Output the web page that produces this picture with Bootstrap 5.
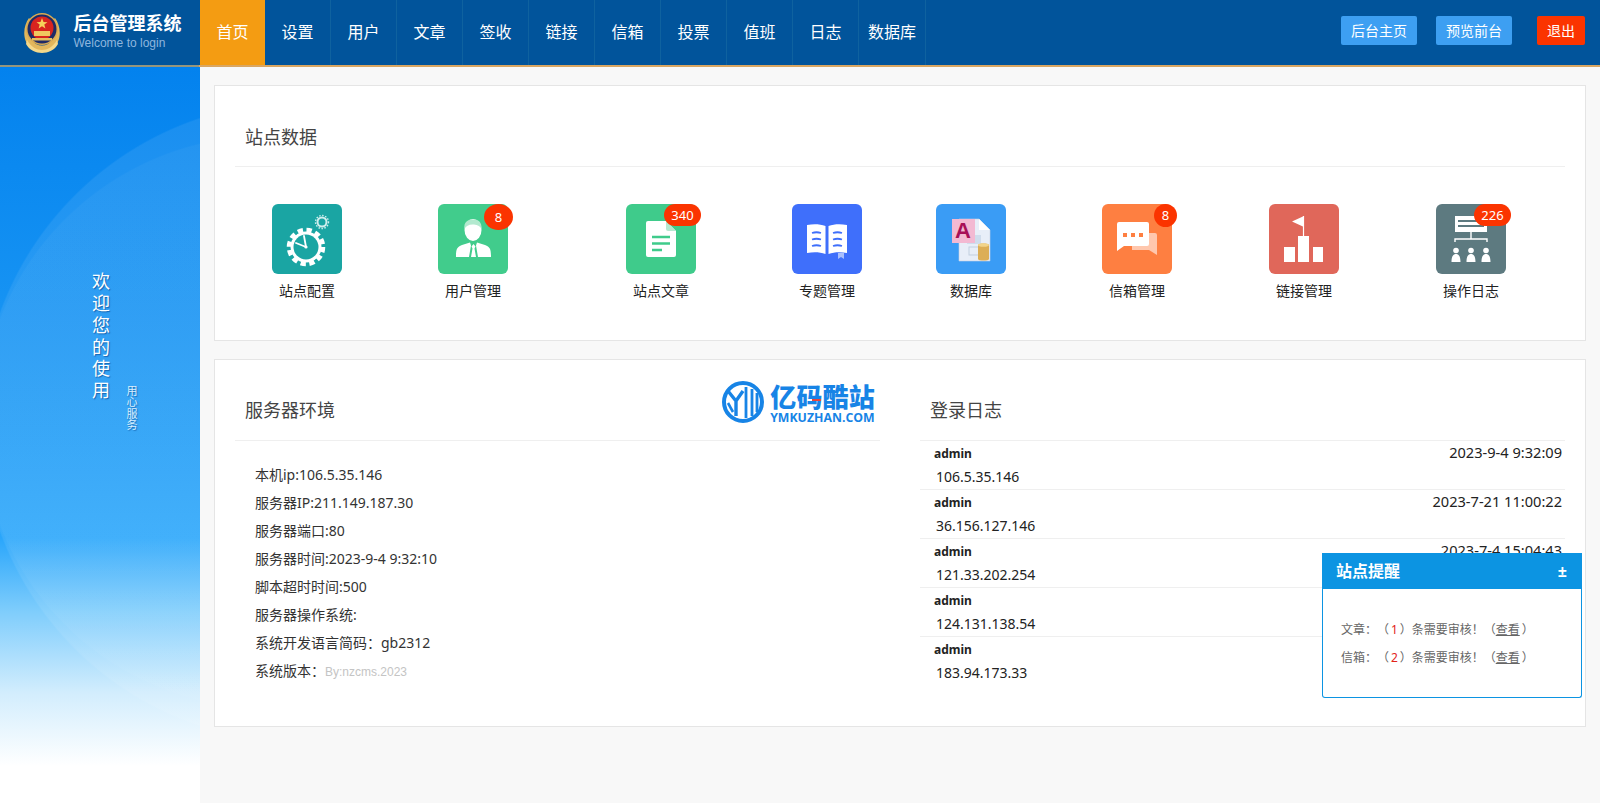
<!DOCTYPE html>
<html lang="zh-CN">
<head>
    <meta charset="UTF-8">
    <title>后台管理系统</title>
    <link href="https://cdn.jsdelivr.net/npm/bootstrap@5.3.0/dist/css/bootstrap.min.css" rel="stylesheet">
    <style>
        html, body {
            height: 100%;
            overflow: hidden;
        }

        body {
            background: #f8f8f8;
            color: #333;
            font-family: "Noto Sans", "Noto Sans CJK SC", sans-serif;
            font-size: 14px;
        }

        .top-bar {
            height: 67px;
            background: #01549b;
            border-bottom: 2px solid #d9a662;
            border-image: linear-gradient(to right, #96967c 200px, #d9a662 200px) 1;
            padding: 0;
            flex-wrap: nowrap;
        }

        .brand-box {
            width: 200px;
            height: 65px;
            padding: 12px 0 0 23px;
            gap: 12.5px;
        }

        .brand-name {
            color: #fff;
            font-family: "Liberation Sans", "Noto Sans CJK SC", sans-serif;
            font-size: 18px;
            font-weight: 700;
            line-height: 24px;
        }

        .brand-sub {
            color: #8fb6de;
            font-family: "Liberation Sans", sans-serif;
            font-size: 12px;
            line-height: 14px;
        }

        .main-menu .nav-link {
            width: 66px;
            height: 65px;
            padding: 0;
            line-height: 65px;
            text-align: center;
            color: #fff;
            font-size: 16px;
            border-right: 1px solid #0f629f;
            white-space: nowrap;
        }

        .main-menu .nav-link.active {
            width: 65px;
            background: #f49c12;
            border-right: 0;
        }

        .main-menu .menu-wide {
            width: 67px;
        }

        .top-actions {
            gap: 19px;
            padding-right: 15px;
        }

        .top-btn {
            --bs-btn-padding-x: 10px;
            --bs-btn-padding-y: 0;
            --bs-btn-font-size: 14px;
            --bs-btn-line-height: 29px;
            --bs-btn-border-width: 0;
            --bs-btn-border-radius: 2px;
            --bs-btn-color: #fff;
            --bs-btn-bg: #3d9ff2;
            --bs-btn-hover-color: #fff;
            --bs-btn-hover-bg: #3d9ff2;
        }

        .top-btn-red {
            --bs-btn-bg: #fb3400;
            --bs-btn-hover-bg: #fb3400;
            margin-left: 6px;
        }

        .page-body {
            height: 736px;
        }

        .side-bar {
            width: 200px;
            height: 100%;
            padding: 205px 0 0 90px;
            gap: 17px;
            background:
                radial-gradient(circle 287px at 267px 355px, rgba(255, 255, 255, .035) 99.5%, transparent 100%),
                radial-gradient(circle 321px at 301px 355px, rgba(255, 255, 255, .08) 99.5%, transparent 100%),
                linear-gradient(to bottom, #0382ee 0, #1e9af5 46%, #2aa6fb 64%, #7fcdfc 74%, #d2edfd 85%, #fff 95%);
            color: #fff;
        }

        .welcome-big {
            writing-mode: vertical-rl;
            font-size: 18px;
            line-height: 19px;
            letter-spacing: 3.9px;
            text-shadow: 1px 1px 1px rgba(0, 60, 130, .6);
        }

        .welcome-small {
            writing-mode: vertical-rl;
            margin-top: 113px;
            font-size: 11px;
            line-height: 11px;
            letter-spacing: .5px;
            color: #d9effe;
            text-shadow: 1px 1px 1px rgba(0, 60, 130, .5);
        }

        .work-area {
            flex: 1;
            padding: 18px 14px 0;
        }

        .box-panel {
            border: 1px solid #e5e5e5;
            border-radius: 0;
            padding: 0 20px;
            background: #fff;
        }

        .panel-top {
            padding: 36px 10px 15px;
            height: 81px;
            border-bottom: 1px solid #efefef;
            color: #444;
            font-size: 18px;
            line-height: 30px;
        }

        .shortcut-grid {
            display: grid;
            grid-template-columns: 144px 188px 188px 144px 144px 188px 146px 188px;
            padding: 37px 0 39px;
        }

        .shortcut {
            color: #222;
            font-size: 14px;
            line-height: 20px;
            text-align: center;
            text-decoration: none;
        }

        .shortcut-icon {
            position: relative;
            display: block;
            width: 70px;
            height: 70px;
            margin: 0 auto 7px;
            border-radius: 6px;
        }

        .shortcut-icon svg {
            display: block;
        }

        .num-tag {
            position: absolute;
            top: 0;
            height: 22px;
            padding: 0;
            border-radius: 11px;
            background: #fb3400;
            color: #fff;
            font-size: 13px;
            font-weight: 400;
            line-height: 22px;
        }

        .tag-round {
            left: 46px;
            width: 29px;
            height: 26px;
            border-radius: 50%;
            line-height: 26px;
        }

        .tag-mail {
            left: 52px;
            width: 23px;
            height: 23px;
            border-radius: 50%;
            line-height: 23px;
        }

        .tag-wide {
            left: 38px;
            width: 37px;
        }

        .env-panel {
            margin-top: 18px;
        }

        .env-panel .panel-top {
            padding-top: 35px;
            padding-bottom: 16px;
        }

        .env-row {
            --bs-gutter-x: 40px;
        }

        .promo-logo {
            margin: -14px -5px 2px 0;
            height: 42px;
            gap: 6px;
        }

        .promo-name {
            position: relative;
            color: #1784e6;
            font-family: "Noto Sans CJK SC", sans-serif;
            font-size: 26px;
            font-weight: 900;
            line-height: 30px;
            letter-spacing: .2px;
        }

        .promo-name::after {
            content: "";
            position: absolute;
            left: 42px;
            top: 18px;
            width: 9px;
            height: 2px;
            background: #e8443c;
        }

        .promo-url {
            color: #1784e6;
            font-family: "Open Sans", sans-serif;
            font-size: 12.3px;
            font-weight: 700;
            line-height: 13px;
            white-space: nowrap;
        }

        .env-list {
            padding: 20px 0 40px 20px;
            margin: 0;
            list-style: none;
            line-height: 28px;
            color: #333;
        }

        .env-note {
            color: #c4c4c4;
            font-family: "Liberation Sans", sans-serif;
            font-size: 12px;
        }

        .login-list {
            --bs-list-group-border-color: #efefef;
            --bs-list-group-item-padding-x: 0;
            --bs-list-group-item-padding-y: 0;
            --bs-list-group-color: #222;
        }

        .login-row {
            height: 49px;
            padding: 2px 3px 0 14px;
            border-bottom: 1px solid #efefef;
            line-height: 22px;
        }

        .login-name {
            font-size: 12px;
            font-weight: 700;
            color: #222;
        }

        .login-time {
            margin-top: -2px;
            font-size: 14.6px;
        }

        .login-ip {
            padding-left: 2px;
            line-height: 24px;
        }

        .notice-box {
            position: fixed;
            top: 553px;
            left: 1322px;
            width: 260px;
            height: 145px;
            border: 1px solid #0c94e2;
            border-top: 0;
            border-radius: 0 0 3px 3px;
            background: #fff;
            color: #666;
            font-size: 12px;
        }

        .notice-head {
            height: 36px;
            margin: 0 -1px;
            padding: 0 15px 0 14px;
            background: #0c94e2;
            color: #fff;
            font-size: 16px;
            font-weight: 700;
            line-height: 36px;
        }

        .notice-body {
            padding: 27px 18px 0;
            line-height: 28px;
            white-space: nowrap;
            word-spacing: -1.2px;
            text-spacing-trim: space-all;
        }

        .notice-body a {
            color: #666;
        }

        .notice-red {
            color: #e2231a;
        }
    </style>
</head>
<body>

<nav class="navbar top-bar align-items-start">
    <div class="brand-box d-flex">
        <svg width="38" height="41" viewBox="0 0 38 41">
            <path d="M6 6C0 14 -1 28 7 35c3 3 8 5 12 5s9-2 12-5c8-7 7-21 1-29l-3 3c4 8 3 18-4 23-4 2-8 2-12 0C6 27 5 17 9 9Z" fill="#e2b75c"/>
            <path d="M4 28c4 7 10 10 15 10s11-3 15-10l1 4c-3 6-10 9-16 9S6 38 3 32Z" fill="#f4d88a"/>
            <circle cx="19" cy="17" r="16" fill="#d9aa52"/>
            <circle cx="19" cy="17" r="14.5" fill="#1e2a66"/>
            <circle cx="19" cy="16" r="11.5" fill="#d8241f"/>
            <path d="M19 6l1.5 4 4 .2-3.2 2.4 1.1 3.9-3.4-2.2-3.4 2.2 1.1-3.9-3.2-2.4 4-.2Z" fill="#f6d25a"/>
            <rect x="11" y="19" width="16" height="5" fill="#f0c860"/>
            <rect x="9" y="26" width="20" height="2.5" fill="#e6bd5e"/>
        </svg>
        <div>
            <div class="brand-name">后台管理系统</div>
            <div class="brand-sub">Welcome to login</div>
        </div>
    </div>

    <ul class="nav main-menu me-auto">
        <li class="nav-item"><a class="nav-link active" href="#">首页</a></li>
        <li class="nav-item"><a class="nav-link" href="#">设置</a></li>
        <li class="nav-item"><a class="nav-link" href="#">用户</a></li>
        <li class="nav-item"><a class="nav-link" href="#">文章</a></li>
        <li class="nav-item"><a class="nav-link" href="#">签收</a></li>
        <li class="nav-item"><a class="nav-link" href="#">链接</a></li>
        <li class="nav-item"><a class="nav-link" href="#">信箱</a></li>
        <li class="nav-item"><a class="nav-link" href="#">投票</a></li>
        <li class="nav-item"><a class="nav-link" href="#">值班</a></li>
        <li class="nav-item"><a class="nav-link" href="#">日志</a></li>
        <li class="nav-item"><a class="nav-link menu-wide" href="#">数据库</a></li>
    </ul>

    <div class="top-actions d-flex pt-3">
        <a class="btn top-btn" href="#">后台主页</a>
        <a class="btn top-btn" href="#">预览前台</a>
        <a class="btn top-btn top-btn-red" href="#">退出</a>
    </div>
</nav>

<div class="page-body d-flex">
    <aside class="side-bar d-flex align-items-start">
        <div class="welcome-big">欢迎您的使用</div>
        <div class="welcome-small">用心服务</div>
    </aside>

    <main class="work-area">
        <section class="box-panel">
            <div class="panel-top">站点数据</div>
            <div class="shortcut-grid">
                <a class="shortcut" href="#">
                    <span class="shortcut-icon">
                        <svg width="70" height="70" viewBox="0 0 70 70">
                            <rect width="70" height="70" rx="6" fill="#1aa5a3"/>
                            <circle cx="34" cy="43" r="17" fill="none" stroke="#fff" stroke-width="4.500" stroke-dasharray="5.300 3.600"/>
                            <circle cx="34" cy="43" r="15.500" fill="#fff"/>
                            <circle cx="34" cy="43" r="12.500" fill="#1aa5a3"/>
                            <path d="M34 43L32 32M34 43L24 39" stroke="#fff" stroke-width="1.800" stroke-linecap="round"/>
                            <circle cx="34" cy="43" r="1.600" fill="#fff"/>
                            <circle cx="50" cy="18" r="4.500" fill="none" stroke="#cfeeed" stroke-width="2"/>
                            <circle cx="50" cy="18" r="6.500" fill="none" stroke="#cfeeed" stroke-width="1.400" stroke-dasharray="1.500 1.500"/>
                        </svg>
                    </span>
                    站点配置
                </a>
                <a class="shortcut" href="#">
                    <span class="shortcut-icon">
                        <svg width="70" height="70" viewBox="0 0 70 70">
                            <rect width="70" height="70" rx="6" fill="#41cc8c"/>
                            <ellipse cx="35" cy="26" rx="8.500" ry="11" fill="#fff"/>
                            <path d="M26.500 25c-1-7 3-9.500 8.500-9.500 6 0 9 3 8.500 9.500-2-3.500-5-4.500-9-4.500-4 0-6.500 1.500-8 4.500Z" fill="#b3e9cf"/>
                            <path d="M18 53c0-8 1-10 6-12l8-2.500 1 3-2 11.500ZM53 53c0-8-1-10-6-12l-8-2.500-1 3 2 11.500Z" fill="#fff"/>
                            <path d="M35.500 40l2 2.500-1 2 1.500 8.500h-5l1.500-8.500-1-2Z" fill="#fff"/>
                        </svg>
                        <span class="num-tag tag-round">8</span>
                    </span>
                    用户管理
                </a>
                <a class="shortcut" href="#">
                    <span class="shortcut-icon">
                        <svg width="70" height="70" viewBox="0 0 70 70">
                            <rect width="70" height="70" rx="6" fill="#3fcb8b"/>
                            <path d="M22 17h18l10 10v24a2 2 0 0 1-2 2H22a2 2 0 0 1-2-2V19a2 2 0 0 1 2-2Z" fill="#fff"/>
                            <path d="M40 17l10 10H42a2 2 0 0 1-2-2Z" fill="#b5e9d0"/>
                            <path d="M26 33h18M26 39.500h18M26 46h10" stroke="#3fcb8b" stroke-width="2.600"/>
                        </svg>
                        <span class="num-tag tag-wide">340</span>
                    </span>
                    站点文章
                </a>
                <a class="shortcut" href="#">
                    <span class="shortcut-icon">
                        <svg width="70" height="70" viewBox="0 0 70 70">
                            <rect width="70" height="70" rx="6" fill="#3f6ffb"/>
                            <path d="M15 21c7-1.500 13-1 18.500 1v28C28 48 22 47.500 15 49Z" fill="#fff"/>
                            <path d="M55 21c-7-1.500-13-1-18.500 1v28c5.500-2 11.500-2.500 18.500-1Z" fill="#fff"/>
                            <path d="M20 29c3-1 6-1 9 0M20 35.500c3-1 6-1 9 0M20 42c3-1 6-1 9 0M41 29c3-1 6-1 9 0M41 35.500c3-1 6-1 9 0M41 42c3-1 6-1 9 0" fill="none" stroke="#3f6ffb" stroke-width="1.800"/>
                            <path d="M46 49h6v6l-3-2-3 2Z" fill="#a9bffc"/>
                        </svg>
                    </span>
                    专题管理
                </a>
                <a class="shortcut" href="#">
                    <span class="shortcut-icon">
                        <svg width="70" height="70" viewBox="0 0 70 70">
                            <rect width="70" height="70" rx="6" fill="#3a9cf5"/>
                            <path d="M23 15h20l11 11v31H23Z" fill="#e8eef8" stroke="#c6d2e2" stroke-width=".6"/>
                            <path d="M43 15l11 11H43Z" fill="#fff"/>
                            <rect x="31" y="31" width="14" height="9" fill="#cfdcec"/>
                            <rect x="33" y="43" width="11" height="8" fill="none" stroke="#c2cfdf"/>
                            <rect x="16" y="15" width="23" height="24" fill="#f3b9d2"/>
                            <text x="27" y="34" text-anchor="middle" fill="#a80f57" font-family="Liberation Sans, sans-serif" font-size="22" font-weight="700">A</text>
                            <path d="M42 41c0-2 11-2 11 0v14c0 2-11 2-11 0Z" fill="#dcae56"/>
                            <ellipse cx="47.500" cy="41" rx="5.500" ry="1.800" fill="#f2d48a"/>
                        </svg>
                    </span>
                    数据库
                </a>
                <a class="shortcut" href="#">
                    <span class="shortcut-icon">
                        <svg width="70" height="70" viewBox="0 0 70 70">
                            <rect width="70" height="70" rx="6" fill="#fe7f41"/>
                            <path d="M30 29h23a2 2 0 0 1 2 2v20l-8-5H30Z" fill="#ffc7ad"/>
                            <path d="M17 18h28a2 2 0 0 1 2 2v20a2 2 0 0 1-2 2H22l-7 5V20a2 2 0 0 1 2-2Z" fill="#fff"/>
                            <rect x="21" y="29" width="4" height="4" fill="#fe7f41"/>
                            <rect x="29" y="29" width="4" height="4" fill="#fe7f41"/>
                            <rect x="37" y="29" width="4" height="4" fill="#fe7f41"/>
                        </svg>
                        <span class="num-tag tag-mail">8</span>
                    </span>
                    信箱管理
                </a>
                <a class="shortcut" href="#">
                    <span class="shortcut-icon">
                        <svg width="70" height="70" viewBox="0 0 70 70">
                            <rect width="70" height="70" rx="6" fill="#e0675a"/>
                            <path d="M35 12v11l-12-5.500Z" fill="#fff"/>
                            <path d="M34.500 12v20" stroke="#fff" stroke-width="1.200"/>
                            <rect x="15" y="43" width="11" height="15" fill="#fff"/>
                            <rect x="29" y="32" width="11" height="26" fill="#fff"/>
                            <rect x="44" y="43" width="10" height="15" fill="#fff"/>
                        </svg>
                    </span>
                    链接管理
                </a>
                <a class="shortcut" href="#">
                    <span class="shortcut-icon">
                        <svg width="70" height="70" viewBox="0 0 70 70">
                            <rect width="70" height="70" rx="6" fill="#5d7a80"/>
                            <rect x="19" y="12" width="32" height="16" fill="#fff"/>
                            <path d="M22 17h26M22 22h26" stroke="#5d7a80" stroke-width="1.800"/>
                            <path d="M35 28v7M19 38v-3h32v3" fill="none" stroke="#fff" stroke-width="1.400"/>
                            <circle cx="20" cy="46.500" r="2.800" fill="#fff"/>
                            <circle cx="35" cy="46.500" r="2.800" fill="#fff"/>
                            <circle cx="50" cy="46.500" r="2.800" fill="#fff"/>
                            <path d="M15.500 58c0-6 2-8 4.500-8s4.500 2 4.500 8ZM30.500 58c0-6 2-8 4.500-8s4.500 2 4.500 8ZM45.500 58c0-6 2-8 4.500-8s4.500 2 4.500 8Z" fill="#fff"/>
                        </svg>
                        <span class="num-tag tag-wide">226</span>
                    </span>
                    操作日志
                </a>
            </div>
        </section>

        <section class="box-panel env-panel">
            <div class="row env-row">
                <div class="col-6">
                    <div class="panel-top d-flex justify-content-between align-items-start">
                        <span>服务器环境</span>
                        <div class="promo-logo d-flex align-items-center">
                            <svg width="42" height="42" viewBox="0 0 42 42">
                                <circle cx="21" cy="21" r="19" fill="#fff" stroke="#1784e6" stroke-width="4"/>
                                <path d="M6 10l8 10 7-10M14 20v15" fill="none" stroke="#1784e6" stroke-width="3.400"/>
                                <path d="M6 22l5 9" fill="none" stroke="#1784e6" stroke-width="2.600"/>
                                <path d="M24 6v31M30 8v27M35 12v19" fill="none" stroke="#1784e6" stroke-width="2.800"/>
                            </svg>
                            <div>
                                <div class="promo-name">亿码酷站</div>
                                <div class="promo-url">YMKUZHAN.COM</div>
                            </div>
                        </div>
                    </div>
                    <ul class="env-list">
                        <li>本机ip:106.5.35.146</li>
                        <li>服务器IP:211.149.187.30</li>
                        <li>服务器端口:80</li>
                        <li>服务器时间:2023-9-4 9:32:10</li>
                        <li>脚本超时时间:500</li>
                        <li>服务器操作系统:</li>
                        <li>系统开发语言简码：gb2312</li>
                        <li>系统版本：<span class="env-note">By:nzcms.2023</span></li>
                    </ul>
                </div>
                <div class="col-6">
                    <div class="panel-top">登录日志</div>
                    <div id="loginList" class="login-list list-group list-group-flush"></div>
                </div>
            </div>
        </section>
    </main>
</div>

<div class="notice-box">
    <div class="notice-head d-flex justify-content-between">
        <span>站点提醒</span>
        <span>±</span>
    </div>
    <div class="notice-body">
        <div>文章：（ <span class="notice-red">1</span> ）条需要审核！（<a href="#">查看</a> ）</div>
        <div>信箱：（ <span class="notice-red">2</span> ）条需要审核！（<a href="#">查看</a> ）</div>
    </div>
</div>

<script src="https://cdn.jsdelivr.net/npm/bootstrap@5.3.0/dist/js/bootstrap.bundle.min.js"></script>
<script>
    // the last two times sit behind the notice box, so they are left out
    const logins = [
        ["106.5.35.146", "2023-9-4 9:32:09"],
        ["36.156.127.146", "2023-7-21 11:00:22"],
        ["121.33.202.254", "2023-7-4 15:04:43"],
        ["124.131.138.54", ""],
        ["183.94.173.33", ""]
    ];

    // 登录日志
    document.getElementById("loginList").innerHTML = logins.map(([ip, time]) => `
        <div class="list-group-item login-row">
            <div class="d-flex justify-content-between">
                <span class="login-name">admin</span>
                <span class="login-time">${time}</span>
            </div>
            <div class="login-ip">${ip}</div>
        </div>
    `).join("");
</script>
</body>
</html>
